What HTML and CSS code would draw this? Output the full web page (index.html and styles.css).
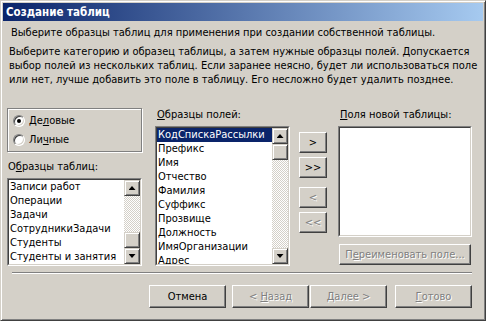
FILE: index.html
```html
<!DOCTYPE html>
<html lang="ru">
<head>
    <meta charset="UTF-8">
    <meta name="viewport" content="width=device-width, initial-scale=1.0">
    <title>Создание таблиц</title>
    <link rel="stylesheet" href="styles.css">
</head>
<body>
    <div class="window">
        <div class="titlebar">Создание таблиц</div>
        <div class="dialog">
            <p class="intro">Выберите образцы таблиц для применения при создании собственной таблицы.</p>
            <p class="hint">Выберите категорию и образец таблицы, а затем нужные образцы полей. Допускается<br>выбор полей из нескольких таблиц. Если заранее неясно, будет ли использоваться поле<br>или нет, лучше добавить это поле в таблицу. Его несложно будет удалить позднее.</p>

            <div class="main">
                <!-- categories + sample tables -->
                <div class="col col-tables">
                    <div class="groupbox">
                        <label class="radio"><span class="radio-mark checked"></span>Де<u>л</u>овые</label>
                        <label class="radio"><span class="radio-mark"></span>Ли<u>ч</u>ные</label>
                    </div>
                    <div class="caption caption-tables">О<u>б</u>разцы таблиц:</div>
                    <div class="listbox list-tables">
                        <div class="listbox-inner">
                            <ul class="items">
                                <li>Записи работ</li>
                                <li>Операции</li>
                                <li>Задачи</li>
                                <li>СотрудникиЗадачи</li>
                                <li>Студенты</li>
                                <li>Студенты и занятия</li>
                            </ul>
                            <div class="scrollbar thumb-end">
                                <div class="sb-btn sb-up"></div>
                                <div class="sb-track"><div class="sb-thumb"></div></div>
                                <div class="sb-btn sb-down"></div>
                            </div>
                        </div>
                    </div>
                </div>

                <!-- sample fields -->
                <div class="col col-fields">
                    <div class="caption"><u>О</u>бразцы полей:</div>
                    <div class="listbox list-fields">
                        <div class="listbox-inner">
                            <ul class="items">
                                <li class="selected">КодСпискаРассылки</li>
                                <li>Префикс</li>
                                <li>Имя</li>
                                <li>Отчество</li>
                                <li>Фамилия</li>
                                <li>Суффикс</li>
                                <li>Прозвище</li>
                                <li>Должность</li>
                                <li>ИмяОрганизации</li>
                                <li>Адрес</li>
                            </ul>
                            <div class="scrollbar">
                                <div class="sb-btn sb-up"></div>
                                <div class="sb-track"><div class="sb-thumb"></div></div>
                                <div class="sb-btn sb-down"></div>
                            </div>
                        </div>
                    </div>
                </div>

                <!-- move buttons -->
                <div class="col col-move">
                    <button type="button" class="btn btn-move">&gt;</button>
                    <button type="button" class="btn btn-move">&gt;&gt;</button>
                    <button type="button" class="btn btn-move btn-back" disabled>&lt;</button>
                    <button type="button" class="btn btn-move" disabled>&lt;&lt;</button>
                </div>

                <!-- new table fields -->
                <div class="col col-new">
                    <div class="caption"><u>П</u>оля новой таблицы:</div>
                    <div class="listbox list-new">
                        <div class="listbox-inner"></div>
                    </div>
                    <button type="button" class="btn btn-rename" disabled>П<u>е</u>реименовать поле...</button>
                </div>
            </div>

            <div class="separator"></div>

            <div class="footer">
                <button type="button" class="btn btn-wide">Отмена</button>
                <button type="button" class="btn btn-wide btn-prev" disabled>&lt; <u>Н</u>азад</button>
                <button type="button" class="btn btn-wide" disabled><u>Д</u>алее &gt;</button>
                <button type="button" class="btn btn-wide btn-finish" disabled><u>Г</u>отово</button>
            </div>
        </div>
    </div>
</body>
</html>
```

FILE: styles.css
```css
:root {
    --face: #d4d0c8;
    --shadow: #808080;
    --dark: #404040;
    --light: #ffffff;
    --select: #0a246a;
}

body {
    margin: 0;
    background: var(--face);
    font-family: "DejaVu Sans Condensed", "DejaVu Sans", sans-serif;
    font-stretch: condensed;
    font-size: 11px;
    color: #000;
}

.window {
    width: 486px;
    height: 321px;
    box-sizing: border-box;
    padding: 2px;
    border: 1px solid;
    border-color: var(--face) var(--dark) var(--dark) var(--face);
    box-shadow: inset 1px 1px var(--light), inset -1px -1px var(--shadow);
    background: var(--face);
}

.titlebar {
    height: 18px;
    line-height: 18px;
    padding-left: 3px;
    background: linear-gradient(90deg, #0a246a 0%, #a6caf0 100%);
    color: #fff;
    font-weight: bold;
    font-size: 11.5px;
}

.dialog {
    height: 297px;
}

.intro {
    margin: 5px 0 0;
    padding-left: 8px;
    line-height: 13px;
}

.hint {
    margin: 6px 0 0;
    padding-left: 6px;
    line-height: 14px;
}

.main {
    display: flex;
    align-items: flex-start;
    margin-top: 21px;
    padding-left: 4px;
    height: 158px;
}

.col-tables {
    width: 135px;
}

.col-fields {
    width: 135px;
    margin-left: 13px;
}

.col-move {
    display: flex;
    flex-direction: column;
    width: 28px;
    margin-left: 9px;
    padding-top: 24px;
}

.col-new {
    width: 134px;
    margin-left: 11px;
}

/* group box with radios */
.groupbox {
    height: 44px;
    box-sizing: border-box;
    padding: 2px 0 0 5px;
    border: 1px solid var(--shadow);
    box-shadow: inset 1px 1px var(--light), 1px 1px var(--light);
}

.radio {
    display: flex;
    align-items: center;
    height: 19px;
}

.radio-mark {
    position: relative;
    width: 12px;
    height: 12px;
    box-sizing: border-box;
    margin-right: 4px;
    border-radius: 50%;
    border: 1px solid;
    border-color: var(--shadow) var(--light) var(--light) var(--shadow);
    box-shadow: inset 1px 1px var(--dark), inset -1px -1px var(--face);
    background: #fff;
}

.radio-mark.checked::after {
    content: "";
    position: absolute;
    left: 3px;
    top: 3px;
    width: 4px;
    height: 4px;
    border-radius: 50%;
    background: #000;
}

.caption {
    line-height: 14px;
    padding-left: 2px;
    white-space: nowrap;
}

.caption-tables {
    margin-top: 8px;
    padding-left: 1px;
}

/* list boxes */
.listbox {
    margin-top: 4px;
    border: 1px solid;
    border-color: var(--shadow) var(--light) var(--light) var(--shadow);
}

.listbox-inner {
    display: flex;
    height: 100%;
    box-sizing: border-box;
    border: 1px solid;
    border-color: var(--dark) var(--face) var(--face) var(--dark);
    background: #fff;
}

.list-tables { height: 88px; box-sizing: border-box; }
.list-fields { height: 140px; box-sizing: border-box; }
.list-new { height: 111px; box-sizing: border-box; }

.items {
    flex: 1;
    margin: 0;
    padding: 0;
    list-style: none;
    overflow: hidden;
}

.items li {
    height: 14px;
    line-height: 14px;
    padding-left: 1px;
    white-space: nowrap;
}

.items li.selected {
    background: var(--select);
    color: #fff;
}

.scrollbar {
    display: flex;
    flex-direction: column;
    width: 16px;
}

.sb-track {
    flex: 1;
    display: flex;
    flex-direction: column;
    background: repeating-conic-gradient(#fff 0 25%, var(--face) 0 50%) 0 0 / 2px 2px;
}

.thumb-end .sb-track {
    justify-content: flex-end;
}

.sb-btn,
.sb-thumb {
    width: 16px;
    height: 16px;
    box-sizing: border-box;
    border: 1px solid;
    border-color: var(--face) var(--dark) var(--dark) var(--face);
    box-shadow: inset 1px 1px var(--light), inset -1px -1px var(--shadow);
    background: var(--face);
}

.sb-btn {
    display: flex;
    align-items: center;
    justify-content: center;
}

.sb-btn::after {
    content: "";
    width: 7px;
    height: 4px;
    background: #000;
}

.sb-up::after {
    clip-path: polygon(50% 0, 100% 100%, 0 100%);
}

.sb-down::after {
    clip-path: polygon(0 0, 100% 0, 50% 100%);
}

/* push buttons */
.btn {
    box-sizing: border-box;
    padding: 0;
    font: inherit;
    color: #000;
    background: var(--face);
    border: 1px solid;
    border-color: var(--light) var(--dark) var(--dark) var(--light);
    box-shadow: inset -1px -1px var(--shadow);
    white-space: nowrap;
}

.btn:disabled {
    color: var(--shadow);
    text-shadow: 1px 1px var(--light);
}

.btn-move {
    height: 21px;
    margin-bottom: 4px;
}

.btn-back {
    margin-top: 5px;
}

.btn-rename {
    width: 132px;
    height: 21px;
    margin: 7px 0 0 1px;
}

.separator {
    width: 460px;
    margin: 6px 0 0 9px;
    border-top: 1px solid var(--shadow);
    border-bottom: 1px solid var(--light);
}

.footer {
    display: flex;
    justify-content: flex-end;
    margin-top: 11px;
    padding-right: 11px;
}

.btn-wide {
    width: 77px;
    height: 23px;
}

.btn-prev {
    margin-left: 6px;
}

.btn-prev + .btn-wide {
    margin-left: 1px;
}

.btn-finish {
    margin-left: 8px;
}
```
